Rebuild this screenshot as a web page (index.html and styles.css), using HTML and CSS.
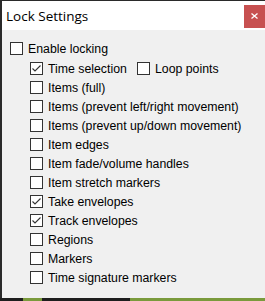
FILE: index.html
```html
<!DOCTYPE html>
<html>
<head>
<meta charset="utf-8">
<link rel="stylesheet" href="styles.css">
</head>
<body>
<div class="window">
  <div class="titlebar">
    <span class="title">Lock Settings</span>
    <span class="close"><svg width="7" height="6" viewBox="0 0 7 6"><path d="M0.5 0.5 L6.5 5.5 M6.5 0.5 L0.5 5.5" stroke="#fff" stroke-width="1.3" fill="none"/></svg></span>
  </div>
  <div class="content">
    <div class="row top">
      <label class="check"><span class="box"></span><span>Enable locking</span></label>
    </div>
    <div class="row sub">
      <label class="check wide"><span class="box on"><svg width="11" height="11" viewBox="0 0 11 11"><path d="M1.5 5.5 L4 8 L9.5 2.5" stroke="#333" stroke-width="1.1" fill="none"/></svg></span><span>Time selection</span></label>
      <label class="check"><span class="box"></span><span>Loop points</span></label>
    </div>
    <div class="row sub"><label class="check"><span class="box"></span><span>Items (full)</span></label></div>
    <div class="row sub"><label class="check"><span class="box"></span><span>Items (prevent left/right movement)</span></label></div>
    <div class="row sub"><label class="check"><span class="box"></span><span>Items (prevent up/down movement)</span></label></div>
    <div class="row sub"><label class="check"><span class="box"></span><span>Item edges</span></label></div>
    <div class="row sub"><label class="check"><span class="box"></span><span>Item fade/volume handles</span></label></div>
    <div class="row sub"><label class="check"><span class="box"></span><span>Item stretch markers</span></label></div>
    <div class="row sub"><label class="check"><span class="box on"><svg width="11" height="11" viewBox="0 0 11 11"><path d="M1.5 5.5 L4 8 L9.5 2.5" stroke="#333" stroke-width="1.1" fill="none"/></svg></span><span>Take envelopes</span></label></div>
    <div class="row sub"><label class="check"><span class="box on"><svg width="11" height="11" viewBox="0 0 11 11"><path d="M1.5 5.5 L4 8 L9.5 2.5" stroke="#333" stroke-width="1.1" fill="none"/></svg></span><span>Track envelopes</span></label></div>
    <div class="row sub"><label class="check"><span class="box"></span><span>Regions</span></label></div>
    <div class="row sub"><label class="check"><span class="box"></span><span>Markers</span></label></div>
    <div class="row sub"><label class="check"><span class="box"></span><span>Time signature markers</span></label></div>
  </div>
</div>
<div class="backdrop">
  <span class="seg dark s1"></span><span class="seg green s2"></span><span class="seg dark s3"></span><span class="seg green s4"></span>
</div>
</body>
</html>
```
FILE: styles.css
```css
html, body {
  margin: 0;
  padding: 0;
}
body {
  width: 265px;
  height: 301px;
  background: #2a2a2a;
  overflow: hidden;
  font-family: "Liberation Sans", Arial, sans-serif;
}
.window {
  margin-left: 2px;
  margin-top: 1px;
  width: 263px;
  height: 297px;
  background: #f0f0f0;
  display: flex;
  flex-direction: column;
}
.titlebar {
  height: 29px;
  background: #ffffff;
  display: flex;
  align-items: center;
  justify-content: space-between;
  flex-shrink: 0;
}
.title {
  font-family: "Open Sans", "Noto Sans", sans-serif;
  font-size: 13.5px;
  color: #000;
  margin-left: 4px;
}
.close {
  width: 21px;
  height: 23px;
  background: #c75050;
  margin-right: 0;
  margin-top: 1px;
  display: flex;
  align-items: center;
  justify-content: center;
}
.content {
  padding: 9px 0 0 8px;
  font-size: 12.3px;
  color: #000;
}
.row {
  height: 19px;
  display: flex;
  align-items: center;
}
.row.top {
  margin-bottom: 1px;
}
.row.sub {
  padding-left: 20px;
}
.check {
  display: flex;
  align-items: center;
  white-space: nowrap;
}
.check.wide {
  width: 107px;
}
.box {
  width: 13px;
  height: 13px;
  box-sizing: border-box;
  border: 1px solid #333333;
  background: #ffffff;
  margin-right: 5px;
  flex-shrink: 0;
  display: flex;
  align-items: center;
  justify-content: center;
}
.box svg {
  display: block;
}
.backdrop {
  display: flex;
  height: 3px;
}
.seg {
  height: 3px;
}
.dark { background: #1e1e1e; }
.green { background: #7a9a3c; }
.s1 { width: 23px; }
.s2 { width: 19px; }
.s3 { width: 88px; }
.s4 { flex: 1; }
```
